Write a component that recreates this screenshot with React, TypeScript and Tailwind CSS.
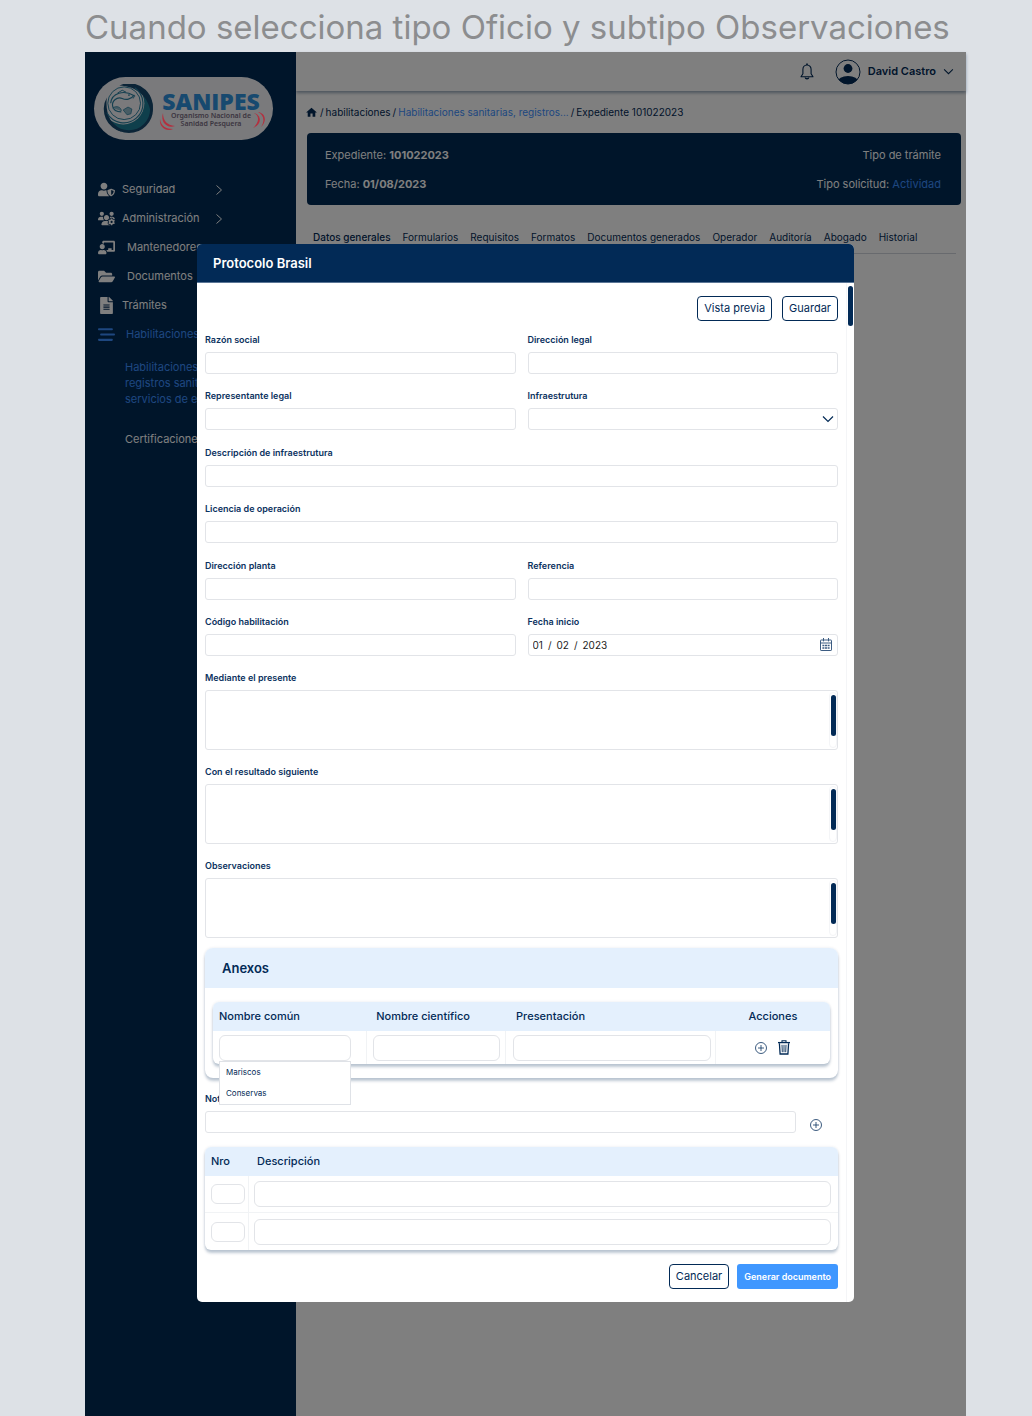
import React from "react";
import { FaUserShield, FaChalkboardTeacher, FaFolderOpen, FaFileAlt } from "react-icons/fa";
import { FaBarsStaggered, FaUsersGear } from "react-icons/fa6";
import { MdHome } from "react-icons/md";

function ChevronRight() {
  return (
    <svg viewBox="0 0 8 12" className="h-3 w-2" fill="none" stroke="currentColor" aria-hidden="true">
      <path d="M1.5 1.5 6.5 6l-5 4.5" />
    </svg>
  );
}

function ChevronDown({ className }: { className: string }) {
  return (
    <svg viewBox="0 0 12 8" className={className} fill="none" stroke="currentColor" strokeWidth="1.2" aria-hidden="true">
      <path d="M1 1.5 6 6.5l5-5" />
    </svg>
  );
}

function PlusCircle() {
  return (
    <svg viewBox="0 0 12 12" className="size-3" fill="none" stroke="#0b3260" strokeWidth="0.8" aria-hidden="true">
      <circle cx="6" cy="6" r="5.5" />
      <path d="M6 3v6M3 6h6" />
    </svg>
  );
}

function Trash() {
  return (
    <svg viewBox="0 0 12 15" className="h-[15px] w-3" fill="none" stroke="#022a56" aria-hidden="true">
      <path d="M0 2.6h12" strokeWidth="1.3" />
      <path d="M4 2.4V.8h4v1.6" strokeWidth="1.1" />
      <path d="M1.4 3.2 2.1 14h7.8l.7-10.8" strokeWidth="1.3" />
      <path d="M4 4.8l.3 7.4M6 4.8v7.4M8 4.8l-.3 7.4" strokeWidth="0.9" />
    </svg>
  );
}

function Calendar() {
  return (
    <svg viewBox="0 0 12 13" className="h-[13px] w-3" fill="none" stroke="#3c5c82" aria-hidden="true">
      <rect x=".5" y="2" width="11" height="10.5" rx=".6" />
      <path d="M.5 5h11M3.5 0v3.4M8.5 0v3.4" />
      <path d="M2.4 7.500h7.200M2.400 10h7.200" strokeWidth="1.500" strokeDasharray="2 .6" />
    </svg>
  );
}

function Bell() {
  return (
    <svg viewBox="0 0 14 18" className="h-[18px] w-3.5" fill="none" stroke="#022a56" strokeWidth="1.1" aria-hidden="true">
      <path d="M7 2C4.3 2 2.9 4 2.9 6.5v4.3L1 13.7h12l-1.9-2.900V6.500C11.100 4 9.700 2 7 2Z" strokeLinejoin="round" />
      <path d="M7 .4V2" strokeWidth="1.6" />
      <path d="M5.3 14.5c.2 1.6 3.2 1.6 3.4 0" strokeWidth="1.5" />
    </svg>
  );
}

function Avatar() {
  return (
    <svg viewBox="0 0 26 26" className="size-[26px]" aria-hidden="true">
      <defs>
        <clipPath id="avatar-clip">
          <circle cx="13" cy="13" r="12" />
        </clipPath>
      </defs>
      <circle cx="13" cy="13" r="12" fill="none" stroke="#022a56" strokeWidth="1" />
      <circle cx="13" cy="9.5" r="4.4" fill="#022a56" />
      <ellipse cx="13" cy="23" rx="10.5" ry="6" fill="#022a56" clipPath="url(#avatar-clip)" />
    </svg>
  );
}

function Logo() {
  return (
    <div className="flex h-[63px] w-[179px] items-center rounded-full bg-[#f4f5f8] pl-2">
      <svg viewBox="0 0 54 52" className="h-[50px] w-[52px] shrink-0" fill="none" aria-hidden="true">
        <circle cx="28" cy="26" r="24" fill="#1f7f98" />
        <circle cx="28" cy="26" r="23.5" stroke="#17496f" strokeWidth="3" />
        <circle cx="22" cy="20" r="22" fill="#f4f5f8" />
        <path d="M18 1.500A24.500 24.500 0 0 1 51 33C50 14 36 2 18 1.500Z" fill="#17496f" />
        <path d="M5 14A24.500 24.500 0 0 0 21 50C9 42 3 30 5 14Z" fill="#17496f" />
        <path d="M34 4A20 20 0 1 1 5 30" stroke="#2a7fa0" strokeWidth="1.200" />
        <circle cx="23" cy="20" r="17" stroke="#2a7fa0" strokeWidth="1" />
        <path d="M9 20C10 9 23 6 33 12c-3 4-8 5-12 3-6-2-11 3-10 8 1 5 5 6 9 6" stroke="#2a7fa0" strokeWidth="1.200" />
        <path d="M16 9.500l5-3 4 2M33 12c1-1 2 1-1 3" stroke="#2a7fa0" strokeWidth="1" />
        <circle cx="28" cy="11.500" r=".9" fill="#2a7fa0" />
        <path d="M11 25c4-3 9-1 9 3M22 27l5-3 4 2-1 5-4 1Z" stroke="#2a7fa0" fill="#8fb8c9" strokeWidth=".8" />
      </svg>
      <div className="relative ml-[5px] flex w-[104px] flex-col items-center">
        <div className="font-['Open_Sans',sans-serif] text-[23px] leading-[22px] font-extrabold text-[#17496f]">SANIPES</div>
        <div className="text-center font-['Noto_Sans',sans-serif] text-[7px] leading-[8px] font-semibold whitespace-nowrap text-[#3a3540]">
          Organismo Nacional de
          <br />
          Sanidad Pesquera
        </div>
        <svg viewBox="0 0 106 20" className="absolute bottom-[-4px] left-0 h-5 w-[106px]" fill="none" aria-hidden="true">
          <path d="M4 1c0 8 4 12 12 13C8 17 1 10 4 1Z" fill="#b3303f" />
          <path d="M1 7c1 7 6 10 13 10C8 20 0 16 1 7Z" fill="#b3303f" />
          <path d="M95 1c6 3 5 10-1 15 9-3 9-13 1-15Z" fill="#b3303f" />
          <path d="M99 0c6 3 7 9 3 15 6-5 5-14-3-15Z" fill="#b3303f" />
        </svg>
      </div>
    </div>
  );
}

const menu = [
  { label: "Seguridad", Icon: FaUserShield, arrow: true, text: "ml-[6px] w-[93px]" },
  { label: "Administración", Icon: FaUsersGear, arrow: true, text: "ml-[6px] w-[93px]" },
  { label: "Mantenedores", Icon: FaChalkboardTeacher, arrow: false, text: "ml-[11px]" },
  { label: "Documentos", Icon: FaFolderOpen, arrow: false, text: "ml-[11px]" },
  { label: "Trámites", Icon: FaFileAlt, arrow: false, text: "ml-[6px]" },
];

function Sidebar() {
  return (
    <aside className="w-[211px] shrink-0 bg-[#002a54] pt-[25px] text-[11px] text-white">
      <div className="pl-[9px]">
        <Logo />
      </div>
      <nav className="mt-[35px] pl-[13px]">
        <ul>
          {menu.map(({ label, Icon, arrow, text }) => (
            <li key={label}>
              <a href="#" className="flex h-[29px] items-center">
                <span className="flex w-[18px]">
                  <Icon className="h-[17px] w-auto max-w-[18px]" />
                </span>
                <span className={text}>{label}</span>
                {arrow && <ChevronRight />}
              </a>
            </li>
          ))}
          <li className="text-[#3d8fff]">
            <a href="#" className="flex h-[29px] items-center">
              <FaBarsStaggered className="size-[17px]" />
              <span className="ml-[11px]">Habilitaciones</span>
            </a>
            <a href="#" className="mt-[10px] ml-[27px] block leading-[16px] whitespace-nowrap">
              Habilitaciones,
              <br />
              registros sanitarios,
              <br />
              servicios de exportación
            </a>
          </li>
          <li className="mt-6 ml-[27px] leading-[16px]">
            <a href="#">Certificaciones</a>
          </li>
        </ul>
      </nav>
    </aside>
  );
}

const tabs = ["Formularios", "Requisitos", "Formatos", "Documentos generados", "Operador", "Auditoría", "Abogado", "Historial"];

function MainPage() {
  return (
    <main className="min-w-0 flex-1 bg-white text-[#022a56]">
      <header className="flex h-[39px] items-center justify-end pr-3 shadow-[0_2px_3px_#022a5666]">
        <button type="button" aria-label="Notificaciones">
          <Bell />
        </button>
        <button type="button" className="ml-[21px] flex items-center">
          <Avatar />
          <span className="ml-[7px] text-[11px] font-semibold">David Castro</span>
          <ChevronDown className="ml-[7px] h-[7px] w-[11px]" />
        </button>
      </header>
      <nav className="mt-[13px] flex h-4 items-center gap-[2px] pl-[9px] text-[10px] whitespace-nowrap">
        <a href="#" aria-label="Inicio">
          <MdHome className="size-[13px]" />
        </a>
        <span>/</span>
        <a href="#">habilitaciones</a>
        <span>/</span>
        <a href="#" className="text-[#3d8fff]">Habilitaciones sanitarias, registros...</a>
        <span>/</span>
        <span>Expediente 101022023</span>
      </nav>
      <section className="mt-[13px] mr-[5px] ml-[11px] flex h-[72px] justify-between rounded bg-[#002a54] pt-[14px] pr-5 pl-[18px] text-[11px] leading-[16px] text-white">
        <div className="flex flex-col gap-[13px]">
          <p>Expediente: <strong>101022023</strong></p>
          <p>Fecha: <strong>01/08/2023</strong></p>
        </div>
        <div className="flex flex-col items-end gap-[13px]">
          <p>Tipo de trámite</p>
          <p>Tipo solicitud: <a href="#" className="text-[#3d8fff]">Actividad</a></p>
        </div>
      </section>
      <nav className="mt-6 mr-[10px] ml-[11px] flex h-[25px] gap-3 border-b border-gray-300 pl-[6px] text-[10px] leading-[16px] whitespace-nowrap">
        <a href="#" className="font-medium">Datos generales</a>
        {tabs.map((t) => (
          <a key={t} href="#">{t}</a>
        ))}
      </nav>
    </main>
  );
}

const labelCls = "mb-1 block text-[9px] leading-[16px] font-semibold text-[#0b3260]";
const inputCls = "block h-[22px] w-full rounded-[3px] border border-[#e2e4e8] bg-white px-1 text-[10px] outline-none";
const cellInput = "block w-full rounded-md border border-[#e2e4e8] bg-white px-1 text-[10px] outline-none";
const outlineBtn = "h-[25px] rounded border border-[#022a56] px-[6px] text-[11px] text-[#022a56]";

function Field({ id, label }: { id: string; label: string }) {
  return (
    <div>
      <label htmlFor={id} className={labelCls}>{label}</label>
      <input id={id} type="text" className={inputCls} />
    </div>
  );
}

function Area({ id, label }: { id: string; label: string }) {
  return (
    <div>
      <label htmlFor={id} className={labelCls}>{label}</label>
      <div className="relative">
        <textarea id={id} className="block h-[60px] w-full resize-none rounded-[3px] border border-[#e2e4e8] p-1 text-[10px] outline-none" />
        <span className="absolute inset-y-[2px] right-px w-[8px] rounded-full border border-[#f4f5f7]" />
        <span className="absolute top-[5px] right-[2px] h-[41px] w-[5px] rounded-full bg-[#022a56]" />
      </div>
    </div>
  );
}

function Annexes() {
  return (
    <section className="mt-[10px] rounded-lg shadow-[0_3px_3px_#022a5640,0_0_3px_#022a561a]">
      <h3 className="flex h-10 items-center rounded-t-lg bg-[#e4f0fd] pt-px pl-[17px] text-[13px] font-semibold">Anexos</h3>
      <div className="px-2 py-[14px]">
        <div className="rounded-md shadow-[0_3px_3px_#022a5640,0_0_3px_#022a561a]">
          <table className="w-full table-fixed border-separate border-spacing-0 text-left text-[11px]">
            <thead>
              <tr className="h-[29px] bg-[#e4f0fd]">
                <th className="w-[25%] rounded-tl-md pl-[6px] font-medium">Nombre común</th>
                <th className="w-[22.5%] pl-[9px] font-medium">Nombre científico</th>
                <th className="w-[34%] pl-[10px] font-medium">Presentación</th>
                <th className="rounded-tr-md text-center font-medium">Acciones</th>
              </tr>
            </thead>
            <tbody>
              <tr className="h-[33px]">
                <td className="border-r border-[#f1f3f5] pr-[15px] pl-[6px]">
                  <div className="relative">
                    <input type="text" role="combobox" aria-expanded="true" aria-controls="nombre-opciones" aria-label="Nombre común" className={cellInput + " h-[26px]"} />
                    <ul id="nombre-opciones" role="listbox" className="absolute inset-x-0 top-full z-10 border border-[#dfe2e7] bg-white text-[8px] leading-[21px]">
                      <li role="option" aria-selected="false" className="pl-[6px]">Mariscos</li>
                      <li role="option" aria-selected="false" className="pl-[6px]">Conservas</li>
                    </ul>
                  </div>
                </td>
                <td className="border-r border-[#f1f3f5] pr-[5px] pl-[6px]">
                  <input type="text" aria-label="Nombre científico" className={cellInput + " h-[26px]"} />
                </td>
                <td className="border-r border-[#f1f3f5] pr-1 pl-[7px]">
                  <input type="text" aria-label="Presentación" className={cellInput + " h-[26px]"} />
                </td>
                <td>
                  <div className="flex items-center justify-center gap-[11px]">
                    <button type="button" aria-label="Agregar fila"><PlusCircle /></button>
                    <button type="button" aria-label="Eliminar fila"><Trash /></button>
                  </div>
                </td>
              </tr>
            </tbody>
          </table>
        </div>
      </div>
    </section>
  );
}

function Notes() {
  return (
    <>
      <div className="mt-[13px] flex items-end">
        <div className="flex-1">
          <label htmlFor="nota" className={labelCls}>Nota</label>
          <input id="nota" type="text" className={inputCls} />
        </div>
        <button type="button" aria-label="Agregar nota" className="mr-4 mb-[2px] ml-[14px]"><PlusCircle /></button>
      </div>
      <div className="mt-[14px] rounded-md shadow-[0_3px_3px_#022a5640,0_0_3px_#022a561a]">
        <table className="w-full table-fixed border-separate border-spacing-0 text-left text-[11px]">
          <thead>
            <tr className="h-[29px] bg-[#e4f0fd]">
              <th className="w-11 rounded-tl-md pl-[6px] font-medium">Nro</th>
              <th className="rounded-tr-md pl-2 font-medium">Descripción</th>
            </tr>
          </thead>
          <tbody>
            {[1, 2].map((n) => (
              <tr key={n} className="h-[37px]">
                <td className={n === 1 ? "border-r border-b border-[#f1f3f5] pr-[3px] pl-[6px]" : "border-r border-[#f1f3f5] pr-[3px] pl-[6px]"}>
                  <input type="text" aria-label={`Nro ${n}`} className={cellInput + " h-5"} />
                </td>
                <td className={n === 1 ? "border-b border-[#f1f3f5] pr-[7px] pl-[5px]" : "pr-[7px] pl-[5px]"}>
                  <input type="text" aria-label={`Descripción ${n}`} className={cellInput + " h-[26px]"} />
                </td>
              </tr>
            ))}
          </tbody>
        </table>
      </div>
    </>
  );
}

function Modal() {
  return (
    <div role="dialog" aria-label="Protocolo Brasil" className="mx-auto mt-48 mb-28 w-full max-w-[657px] rounded-[5px] bg-white text-[#022a56]">
      <h2 className="flex h-[39px] items-center rounded-t-[5px] border-b border-[#5b7696] bg-[#022a56] pt-px pl-4 text-[13px] font-semibold text-white">Protocolo Brasil</h2>
      <div className="flex">
        <form className="min-w-0 flex-1 pt-[13px] pb-[13px] pl-2">
          <div className="mb-[11px] flex justify-end gap-[10px]">
            <button type="button" className={outlineBtn}>Vista previa</button>
            <button type="button" className={outlineBtn}>Guardar</button>
          </div>
          <div className="flex flex-col gap-[15px]">
            <div className="grid grid-cols-2 gap-x-3 gap-y-[14px]">
              <Field id="razon" label="Razón social" />
              <Field id="direccion" label="Dirección legal" />
              <Field id="representante" label="Representante legal" />
              <div>
                <label htmlFor="infra" className={labelCls}>Infraestrutura</label>
                <div className="relative">
                  <select id="infra" className={inputCls + " appearance-none"}>
                    <option></option>
                  </select>
                  <ChevronDown className="pointer-events-none absolute top-[7px] right-1 h-2 w-3" />
                </div>
              </div>
            </div>
            <div className="flex flex-col gap-[14px]">
              <Field id="descripcion" label="Descripción de infraestrutura" />
              <Field id="licencia" label="Licencia de operación" />
            </div>
            <div className="flex flex-col gap-[14px]">
              <div className="grid grid-cols-2 gap-x-3 gap-y-[14px]">
                <Field id="planta" label="Dirección planta" />
                <Field id="referencia" label="Referencia" />
                <Field id="codigo" label="Código habilitación" />
                <div>
                  <label htmlFor="fecha" className={labelCls}>Fecha inicio</label>
                  <div className="relative">
                    <input id="fecha" type="text" defaultValue={"01\u2002/\u200202\u2002/\u20022023"} className={inputCls + " text-[#1c1c1c]"} />
                    <button type="button" aria-label="Abrir calendario" className="absolute top-1 right-[6px]"><Calendar /></button>
                  </div>
                </div>
              </div>
              <Area id="mediante" label="Mediante el presente" />
              <Area id="resultado" label="Con el resultado siguiente" />
              <Area id="observaciones" label="Observaciones" />
            </div>
          </div>
          <Annexes />
          <Notes />
          <div className="mt-[14px] flex justify-end gap-2">
            <button type="button" className={outlineBtn}>Cancelar</button>
            <button type="button" className="h-[25px] rounded-[3px] bg-[#3f97ff] px-[7px] text-[9px] font-semibold text-white">Generar documento</button>
          </div>
        </form>
        <div className="ml-2 w-2 border-l border-[#f4f5f7] pt-[3px]">
          <div className="ml-px h-10 w-[5px] rounded-full bg-[#022a56]" />
        </div>
      </div>
    </div>
  );
}

export default function App() {
  return (
    <div className="flex min-h-screen flex-col bg-[#dde1e6] pr-[66px] pl-[85px] font-['Inter',sans-serif]">
      <h1 className="h-[52px] text-[33px] leading-[54px] whitespace-nowrap text-[#8c8d8f]">Cuando selecciona tipo Oficio y subtipo Observaciones</h1>
      <div className="grid flex-1">
        <div className="flex [grid-area:1/1]">
          <Sidebar />
          <MainPage />
        </div>
        <div className="bg-black/50 px-5 [grid-area:1/1]">
          <Modal />
        </div>
      </div>
    </div>
  );
}
